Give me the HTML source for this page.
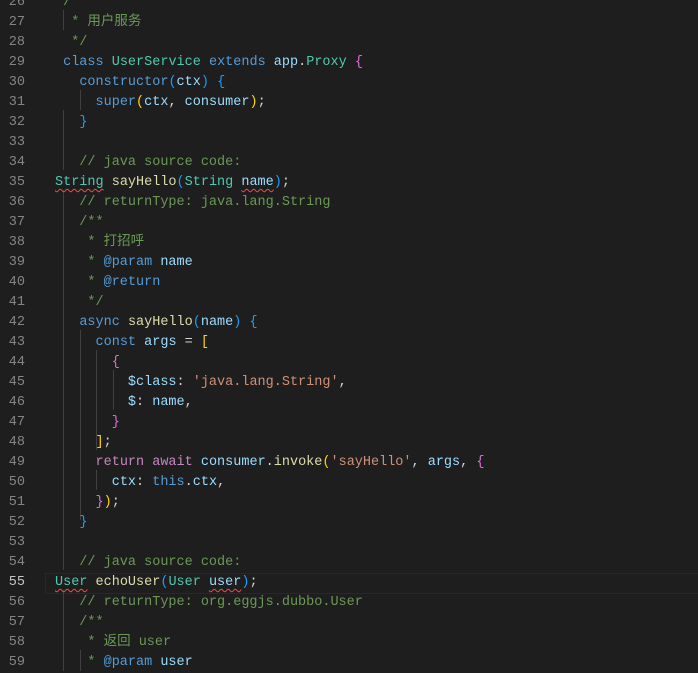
<!DOCTYPE html>
<html><head><meta charset="utf-8"><style>
html,body{margin:0;padding:0;background:#1e1e1e;width:698px;height:671px;overflow:hidden}
#ed{position:absolute;left:0;top:-7px;width:698px}
.l{position:relative;height:20px;line-height:20px;white-space:pre;font-family:"Liberation Mono","Noto Sans CJK SC",monospace;font-size:13.5px;color:#d4d4d4}
.n{position:absolute;left:0;width:25px;text-align:right;color:#858585}
.c{position:absolute;left:55px}
.k{color:#569cd6}.t{color:#4ec9b0}.v{color:#9cdcfe}.f{color:#dcdcaa}.cm{color:#6a9955}.s{color:#ce9178}.p{color:#c586c0}
.g{color:#ffd700}.pu{color:#da70d6}.b{color:#179fff}
.w{text-decoration:underline wavy #f14c4c;text-underline-offset:3px;text-decoration-thickness:1px}
.ig{position:absolute;width:1px;background:#404040}
.hl{position:absolute;left:45px;right:0;top:573px;height:19px;border:1px solid #282828;border-right:none}
</style></head><body>
<div class="hl"></div>
<div class="ig" style="left:63px;top:10px;height:20px"></div>
<div class="ig" style="left:63px;top:110px;height:60px"></div>
<div class="ig" style="left:63px;top:190px;height:380px"></div>
<div class="ig" style="left:63px;top:590px;height:81px"></div>
<div class="ig" style="left:80px;top:90px;height:20px"></div>
<div class="ig" style="left:80px;top:330px;height:190px"></div>
<div class="ig" style="left:80px;top:650px;height:21px"></div>
<div class="ig" style="left:96px;top:350px;height:100px"></div>
<div class="ig" style="left:96px;top:470px;height:20px"></div>
<div class="ig" style="left:113px;top:370px;height:40px"></div>
<div id="ed">
<div class="l"><span class="n">26</span><span class="c cm"> /**</span></div>
<div class="l"><span class="n">27</span><span class="c cm">  * 用户服务</span></div>
<div class="l"><span class="n">28</span><span class="c cm">  */</span></div>
<div class="l"><span class="n">29</span><span class="c"> <span class="k">class</span> <span class="t">UserService</span> <span class="k">extends</span> <span class="v">app</span>.<span class="t">Proxy</span> <span class="pu">{</span></span></div>
<div class="l"><span class="n">30</span><span class="c">   <span class="k">constructor</span><span class="b">(</span><span class="v">ctx</span><span class="b">)</span> <span class="b">{</span></span></div>
<div class="l"><span class="n">31</span><span class="c">     <span class="k">super</span><span class="g">(</span><span class="v">ctx</span>, <span class="v">consumer</span><span class="g">)</span>;</span></div>
<div class="l"><span class="n">32</span><span class="c">   <span class="b">}</span></span></div>
<div class="l"><span class="n">33</span><span class="c"></span></div>
<div class="l"><span class="n">34</span><span class="c cm">   // java source code:</span></div>
<div class="l"><span class="n">35</span><span class="c"><span class="t w">String</span> <span class="f">sayHello</span><span class="b">(</span><span class="t">String</span> <span class="v w">name</span><span class="b">)</span>;</span></div>
<div class="l"><span class="n">36</span><span class="c cm">   // returnType: java.lang.String</span></div>
<div class="l"><span class="n">37</span><span class="c cm">   /**</span></div>
<div class="l"><span class="n">38</span><span class="c cm">    * 打招呼</span></div>
<div class="l"><span class="n">39</span><span class="c"><span class="cm">    * </span><span class="k">@param</span> <span class="v">name</span></span></div>
<div class="l"><span class="n">40</span><span class="c"><span class="cm">    * </span><span class="k">@return</span></span></div>
<div class="l"><span class="n">41</span><span class="c cm">    */</span></div>
<div class="l"><span class="n">42</span><span class="c">   <span class="k">async</span> <span class="f">sayHello</span><span class="b">(</span><span class="v">name</span><span class="b">)</span> <span class="b">{</span></span></div>
<div class="l"><span class="n">43</span><span class="c">     <span class="k">const</span> <span class="v">args</span> = <span class="g">[</span></span></div>
<div class="l"><span class="n">44</span><span class="c">       <span class="pu">{</span></span></div>
<div class="l"><span class="n">45</span><span class="c">         <span class="v">$class</span>: <span class="s">'java.lang.String'</span>,</span></div>
<div class="l"><span class="n">46</span><span class="c">         <span class="v">$</span>: <span class="v">name</span>,</span></div>
<div class="l"><span class="n">47</span><span class="c">       <span class="pu">}</span></span></div>
<div class="l"><span class="n">48</span><span class="c">     <span class="g">]</span>;</span></div>
<div class="l"><span class="n">49</span><span class="c">     <span class="p">return</span> <span class="p">await</span> <span class="v">consumer</span>.<span class="f">invoke</span><span class="g">(</span><span class="s">'sayHello'</span>, <span class="v">args</span>, <span class="pu">{</span></span></div>
<div class="l"><span class="n">50</span><span class="c">       <span class="v">ctx</span>: <span class="k">this</span>.<span class="v">ctx</span>,</span></div>
<div class="l"><span class="n">51</span><span class="c">     <span class="pu">}</span><span class="g">)</span>;</span></div>
<div class="l"><span class="n">52</span><span class="c">   <span class="b">}</span></span></div>
<div class="l"><span class="n">53</span><span class="c"></span></div>
<div class="l"><span class="n">54</span><span class="c cm">   // java source code:</span></div>
<div class="l"><span class="n" style="color:#c6c6c6">55</span><span class="c"><span class="t w">User</span> <span class="f">echoUser</span><span class="b">(</span><span class="t">User</span> <span class="v w">user</span><span class="b">)</span>;</span></div>
<div class="l"><span class="n">56</span><span class="c cm">   // returnType: org.eggjs.dubbo.User</span></div>
<div class="l"><span class="n">57</span><span class="c cm">   /**</span></div>
<div class="l"><span class="n">58</span><span class="c cm">    * 返回 user</span></div>
<div class="l"><span class="n">59</span><span class="c"><span class="cm">    * </span><span class="k">@param</span> <span class="v">user</span></span></div>
</div>
</body></html>
